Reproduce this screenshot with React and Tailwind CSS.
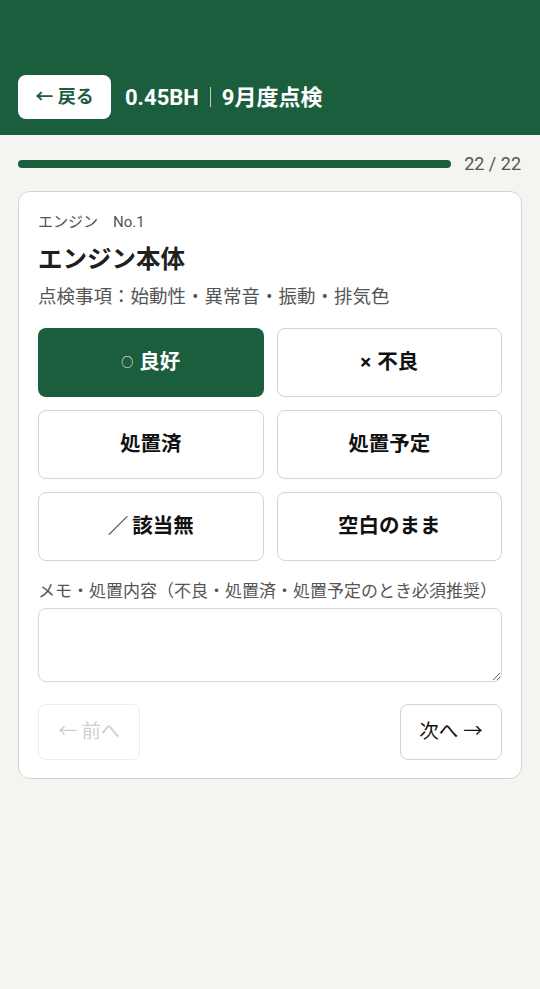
import React, { useState } from 'react';

const options = [
  { mark: '○', label: '良好', value: 'good' },
  { mark: '×', label: '不良', value: 'bad' },
  { mark: '', label: '処置済', value: 'done' },
  { mark: '', label: '処置予定', value: 'planned' },
  { mark: '／', label: '該当無', value: 'na' },
  { mark: '', label: '空白のまま', value: 'blank' },
];

function Mark({ mark }) {
  if (mark === '○') return <span className="text-[12px] font-normal mr-[6px]">○</span>;
  if (mark === '／') return <span className="font-normal mr-[4px]">／</span>;
  if (mark === '×') return <span className="mr-[6px]">×</span>;
  return null;
}

export default function App() {
  const [selected, setSelected] = useState('good');
  const [memo, setMemo] = useState('');

  return (
    <div
      className="min-h-[989px] bg-[#f4f4f0] text-[#1a1a1a]"
      style={{ fontFamily: 'Roboto, "Noto Sans CJK JP", sans-serif' }}
    >
      {/* Header */}
      <header className="bg-[#1b5e3e] h-[135px] flex items-end px-[18px] pb-4">
        <div className="flex items-center gap-[14px]">
          <button className="h-11 w-[93px] rounded-lg bg-white text-[#1b5e3e] text-lg font-bold">
            ← 戻る
          </button>
          <h1 className="text-white text-[22px] font-bold flex items-center">
            0.45BH
            <span className="mx-[11px] h-5 w-px bg-white/70" />
            9月度点検
          </h1>
        </div>
      </header>

      {/* Progress */}
      <div className="flex items-center gap-[13px] px-[18px] pt-[15px] pb-[13px]">
        <div className="flex-1 h-2 rounded-full bg-[#1b5e3e]" />
        <span className="text-lg leading-7 text-[#555] pr-px">22 / 22</span>
      </div>

      {/* Card */}
      <div className="mx-[18px] bg-white border border-[#d4d4d0] rounded-xl px-[19px] pt-[20px] pb-[18px]">
        <div className="text-[15px] text-[#555] leading-5">エンジン　No.1</div>
        <h2 className="mt-[12px] text-[24.5px] font-bold leading-8 text-[#1f1f1f]">エンジン本体</h2>
        <p className="mt-[8px] text-[18.5px] text-[#555] leading-[26px]">点検事項：始動性・異常音・振動・排気色</p>

        <div className="mt-[18px] grid grid-cols-2 gap-x-[13px] gap-y-[13px]">
          {options.map((o) => (
            <button
              key={o.value}
              onClick={() => setSelected(o.value)}
              className={
                selected === o.value
                  ? 'h-[69px] rounded-lg bg-[#1b5e3e] text-white text-[20.5px] font-bold flex items-center justify-center'
                  : 'h-[69px] rounded-lg bg-white border border-[#d4d4d0] text-[#111] text-[20.5px] font-bold flex items-center justify-center'
              }
            >
              <Mark mark={o.mark} />
              {o.label}
            </button>
          ))}
        </div>

        <label className="block mt-[18px] text-[17px] text-[#555] leading-6">
          メモ・処置内容（不良・処置済・処置予定のとき必須推奨）
        </label>
        <textarea
          value={memo}
          onChange={(e) => setMemo(e.target.value)}
          className="mt-[5px] block w-full h-[74px] rounded-lg border border-[#d8d8d4] p-2 text-base outline-none"
        />

        <div className="mt-[22px] flex justify-between">
          <button
            disabled
            className="h-14 w-[102px] rounded-lg border border-[#ececea] text-[19px] text-[#cfcfcf]"
          >
            ← 前へ
          </button>
          <button className="h-14 w-[102px] rounded-lg border border-[#d4d4d0] bg-white text-[19.5px] text-[#111]">
            次へ →
          </button>
        </div>
      </div>
    </div>
  );
}
